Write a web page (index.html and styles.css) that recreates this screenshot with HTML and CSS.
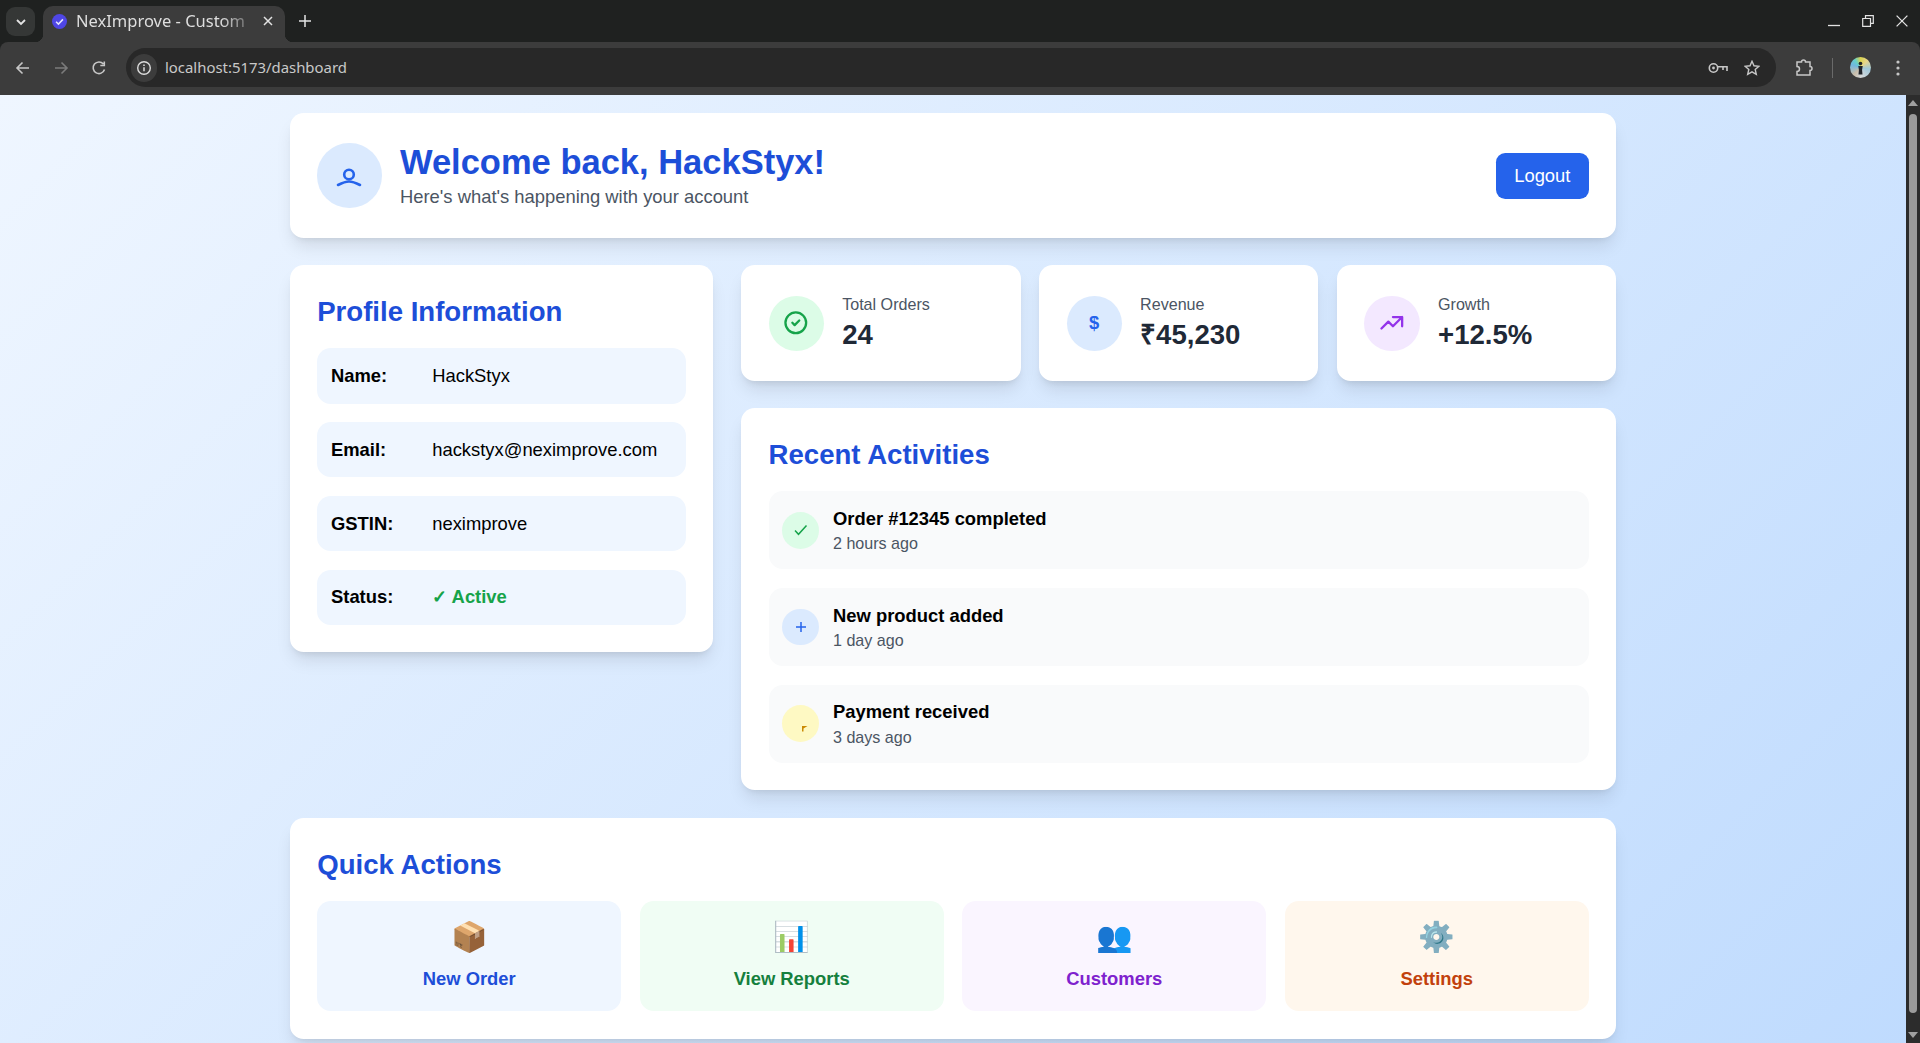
FILE: index.html
```html
<!DOCTYPE html>
<html lang="en">
<head>
<meta charset="UTF-8">
<meta name="viewport" content="width=device-width, initial-scale=1.0">
<title>NexImprove - Customer Dashboard</title>
<link rel="stylesheet" href="styles.css">
</head>
<body>
<div class="browser">
  <div class="tabstrip">
    <div class="tab-search"><svg width="12" height="12" viewBox="0 0 12 12"><path d="M2 4l4 4 4-4" fill="none" stroke="#e3e3e3" stroke-width="1.8"/></svg></div>
    <div class="tab">
      <svg class="favicon" width="15" height="15" viewBox="0 0 14 14"><circle cx="7" cy="7" r="7" fill="#4f46e5"/><path d="M3.8 7.200l2.200 2.200 4.200-4.400" fill="none" stroke="#e6e6ff" stroke-width="1.400"/></svg>
      <span class="tab-title">NexImprove - Custom</span>
      <svg class="tab-close" width="10" height="10" viewBox="0 0 10 10"><path d="M1 1l8 8M9 1l-8 8" stroke="#e3e3e3" stroke-width="1.5"/></svg>
    </div>
    <svg class="new-tab" width="12" height="12" viewBox="0 0 12 12"><path d="M6 0v12M0 6h12" stroke="#e3e3e3" stroke-width="1.5"/></svg>
    <div class="win-btns">
      <svg width="12" height="12" viewBox="0 0 12 12"><path d="M0 10.500h12" stroke="#e3e3e3" stroke-width="1.300"/></svg>
      <svg width="12" height="12" viewBox="0 0 12 12"><path d="M3.500 3V.7h7.800v7.600H9M.7 3.500h7.800v7.800H.7z" fill="none" stroke="#e3e3e3" stroke-width="1.200"/></svg>
      <svg width="12" height="12" viewBox="0 0 12 12"><path d="M.6.6l10.800 10.800M11.400.6L.6 11.400" stroke="#e3e3e3" stroke-width="1.300"/></svg>
    </div>
  </div>
  <div class="toolbar">
    <svg class="nav" width="16" height="16" viewBox="0 0 16 16"><path d="M14 8H2.500M7.500 2.500L2 8l5.500 5.500" fill="none" stroke="#c7c7c7" stroke-width="1.600"/></svg>
    <svg class="nav" width="16" height="16" viewBox="0 0 16 16"><path d="M2 8h11.500M8.500 2.500L14 8l-5.500 5.500" fill="none" stroke="#7b7b7b" stroke-width="1.600"/></svg>
    <svg class="nav" width="16" height="16" viewBox="0 0 16 16"><path d="M13.500 9.500A5.800 5.800 0 1 1 12.400 4M13.300 1.500v4h-4" fill="none" stroke="#c7c7c7" stroke-width="1.600"/></svg>
    <div class="omnibox">
      <div class="site-info"><svg width="16" height="16" viewBox="0 0 16 16"><circle cx="8" cy="8" r="6.300" fill="none" stroke="#dcdcdc" stroke-width="1.400"/><path d="M8 7.200v4M8 4.400v1.500" stroke="#dcdcdc" stroke-width="1.500"/></svg></div>
      <span class="url">localhost:5173/dashboard</span>
      <svg class="key" width="20" height="12" viewBox="0 0 20 12"><circle cx="5.500" cy="6" r="4.200" fill="none" stroke="#c7c7c7" stroke-width="1.600"/><circle cx="5.500" cy="6" r="1.400" fill="#c7c7c7"/><path d="M9.500 4.800h9.500v4.200M15 4.800v3.200" fill="none" stroke="#c7c7c7" stroke-width="1.600"/></svg>
      <svg class="star" width="16" height="16" viewBox="0 0 16 16"><path d="M8 1.300l2 4.500 4.900.5-3.700 3.200 1.100 4.800L8 11.800l-4.300 2.500 1.100-4.800L1.100 6.300 6 5.800z" fill="none" stroke="#c7c7c7" stroke-width="1.400"/></svg>
    </div>
    <svg class="ext" width="18" height="18" viewBox="0 0 18 18"><path d="M2 3h4.500a2 2 0 0 1 4 0H15v4.500a2 2 0 0 1 0 4V16H2v-3.500a2 2 0 0 0 0-5z" fill="none" stroke="#c7c7c7" stroke-width="1.500"/></svg>
    <div class="divider"></div>
    <div class="profile"><svg width="21" height="21" viewBox="0 0 21 21"><circle cx="10.500" cy="6.500" r="1.800" fill="#20242a"/><path d="M8.300 9h4.400l-.6 4 .4 4.500H8.500l.4-4.500z" fill="#20242a"/></svg></div>
    <svg class="dots" width="4" height="16" viewBox="0 0 4 16"><circle cx="2" cy="2" r="1.600" fill="#c7c7c7"/><circle cx="2" cy="8" r="1.600" fill="#c7c7c7"/><circle cx="2" cy="14" r="1.600" fill="#c7c7c7"/></svg>
  </div>
</div>

<div class="viewport">
  <main class="page">
    <header class="card welcome">
      <div class="avatar">
        <svg width="28" height="28" viewBox="0 0 28 28"><circle cx="14" cy="12.500" r="4.800" fill="none" stroke="#2563eb" stroke-width="2.600"/><path d="M3 23c4-2 7-3.500 11-3.500s7 1.500 11 3.500" fill="none" stroke="#2563eb" stroke-width="2.600" stroke-linecap="round"/></svg>
      </div>
      <div class="welcome-text">
        <h1>Welcome back, HackStyx!</h1>
        <p>Here's what's happening with your account</p>
      </div>
      <button class="logout">Logout</button>
    </header>

    <div class="columns">
      <section class="card profile-card">
        <h2>Profile Information</h2>
        <div class="info-list">
          <div class="info-row"><span class="info-label">Name:</span><span>HackStyx</span></div>
          <div class="info-row"><span class="info-label">Email:</span><span>hackstyx@neximprove.com</span></div>
          <div class="info-row"><span class="info-label">GSTIN:</span><span>neximprove</span></div>
          <div class="info-row"><span class="info-label">Status:</span><span class="active">✓ Active</span></div>
        </div>
      </section>

      <div class="right-col">
        <div class="stats">
          <div class="card stat">
            <div class="stat-icon green"><svg class="icon-lg" viewBox="0 0 24 24"><path d="M9 12l2 2 4-4m6 2a9 9 0 1 1-18 0 9 9 0 0 1 18 0z" fill="none" stroke="#16a34a" stroke-width="2" stroke-linecap="round" stroke-linejoin="round"/></svg></div>
            <div><div class="stat-label">Total Orders</div><div class="stat-value">24</div></div>
          </div>
          <div class="card stat">
            <div class="stat-icon blue"><span class="dollar">$</span></div>
            <div><div class="stat-label">Revenue</div><div class="stat-value">₹45,230</div></div>
          </div>
          <div class="card stat">
            <div class="stat-icon purple"><svg class="icon-lg" viewBox="0 0 24 24"><path d="M13 7h8m0 0v8m0-8l-8 8-4-4-6 6" fill="none" stroke="#9333ea" stroke-width="2" stroke-linecap="round" stroke-linejoin="round"/></svg></div>
            <div><div class="stat-label">Growth</div><div class="stat-value">+12.5%</div></div>
          </div>
        </div>

        <section class="card activities">
          <h2>Recent Activities</h2>
          <div class="activity-list">
            <div class="activity">
              <div class="activity-icon green"><svg width="16" height="16" viewBox="0 0 16 16"><path d="M2 8.500l3.500 3.800 8-8.800" fill="none" stroke="#16a34a" stroke-width="1.500"/></svg></div>
              <div><div class="activity-title">Order #12345 completed</div><div class="activity-time">2 hours ago</div></div>
            </div>
            <div class="activity">
              <div class="activity-icon blue"><svg width="16" height="16" viewBox="0 0 16 16"><path d="M8 3v10M3 8h10" fill="none" stroke="#2563eb" stroke-width="1.500"/></svg></div>
              <div><div class="activity-title">New product added</div><div class="activity-time">1 day ago</div></div>
            </div>
            <div class="activity">
              <div class="activity-icon yellow"><svg class="tick" width="6" height="6" viewBox="0 0 6 6"><path d="M0 0h5.500L1.500 2.500V5.500H0z" fill="#ca8a04"/></svg></div>
              <div><div class="activity-title">Payment received</div><div class="activity-time">3 days ago</div></div>
            </div>
          </div>
        </section>
      </div>
    </div>

    <section class="card quick">
      <h2>Quick Actions</h2>
      <div class="tiles">
        <a class="tile tile-blue"><span class="emoji">📦</span><span>New Order</span></a>
        <a class="tile tile-green"><span class="emoji">📊</span><span>View Reports</span></a>
        <a class="tile tile-purple"><span class="emoji">👥</span><span>Customers</span></a>
        <a class="tile tile-orange"><span class="emoji">⚙️</span><span>Settings</span></a>
      </div>
    </section>
  </main>
  <div class="scrollbar">
    <div class="arrow-up"></div>
    <div class="thumb"></div>
    <div class="arrow-down"></div>
  </div>
</div>
</body>
</html>
```

FILE: styles.css
```css
* { box-sizing: border-box; }
html { font-size: 18.4px; }
html, body {
  margin: 0;
  height: 100%;
  overflow: hidden;
}
body {
  display: flex;
  flex-direction: column;
  font-family: "Liberation Sans", Arial, sans-serif;
  font-size: 1rem;
  line-height: 1.5rem;
  color: #000;
}

/* browser frame */
.browser { height: 95px; flex: none; background: #1f2120; }
.tabstrip {
  height: 42px;
  display: flex;
  align-items: flex-start;
  padding: 6px 0 0 6px;
}
.tab-search {
  width: 29px;
  height: 29px;
  margin-top: 1px;
  border-radius: 9px;
  background: #353736;
  display: flex;
  align-items: center;
  justify-content: center;
}
.tab {
  position: relative;
  width: 242px;
  height: 36px;
  margin-left: 8px;
  padding: 0 12px 6px 9px;
  background: #3c3c3c;
  border-radius: 10px 10px 0 0;
  display: flex;
  align-items: center;
}
.tab::before, .tab::after {
  content: "";
  position: absolute;
  bottom: 0;
  width: 8px;
  height: 8px;
}
.tab::before { left: -8px; background: radial-gradient(circle at 0 0, transparent 8px, #3c3c3c 8.5px); }
.tab::after { right: -8px; background: radial-gradient(circle at 100% 0, transparent 8px, #3c3c3c 8.5px); }
.tab-title {
  flex: 1;
  margin-left: 9px;
  white-space: nowrap;
  font-family: "Noto Sans", sans-serif;
  font-size: 16.5px;
  line-height: 20px;
  color: #dedede;
  -webkit-mask-image: linear-gradient(90deg, #000 80%, transparent 101%);
  mask-image: linear-gradient(90deg, #000 80%, transparent 101%);
}
.favicon { flex: none; }
.tab-close { flex: none; margin-left: 6px; }
.new-tab { margin: 9px 0 0 14px; }
.win-btns {
  margin-left: auto;
  display: flex;
  gap: 22px;
  padding: 9px 12px 0 0;
}
.toolbar {
  height: 53px;
  background: #3c3c3c;
  display: flex;
  align-items: center;
  border-radius: 8px 8px 0 0;
  padding: 0 0 2px 15px;
}
.nav { margin-right: 22px; flex: none; }
.nav:nth-child(3) { margin-right: 19px; }
.omnibox {
  width: 1650px;
  height: 39px;
  background: #282828;
  border-radius: 20px;
  display: flex;
  align-items: center;
  padding: 0 12px 0 5px;
}
.site-info {
  width: 26px;
  height: 28px;
  border-radius: 14px;
  background: #3c3c3c;
  display: flex;
  align-items: center;
  justify-content: center;
}
.url {
  margin-left: 8px;
  padding-bottom: 2px;
  font-family: "Noto Sans", sans-serif;
  font-size: 14.9px;
  line-height: 20px;
  color: #c9c9c9;
}
.key { margin-left: auto; margin-right: -2px; }
.star { margin-left: 18px; margin-right: 4px; }
.ext { margin-left: 19px; }
.divider { width: 1px; height: 20px; background: #6a6a6a; margin-left: 19px; }
.profile {
  width: 21px;
  height: 21px;
  margin-left: 17px;
  border-radius: 50%;
  background: conic-gradient(#d8d24f, #e8d58a 12%, #9fc7d9 28%, #d3d8db 48%, #c9bda9 62%, #70b7e0 80%, #66d0c8 90%, #d8d24f);
}
.profile svg { display: block; }
.dots { margin-left: 25px; }

/* page */
.viewport {
  flex: 1;
  min-height: 0;
  display: flex;
  overflow: hidden;
  background: linear-gradient(135deg, #eff6ff, #bfdbfe);
}
.page {
  flex: 1;
  padding: 1rem 289.6px 0;
  display: flex;
  flex-direction: column;
  gap: 1.5rem;
}
.scrollbar {
  width: 14px;
  flex: none;
  background: #2c2c2c;
  position: relative;
}
.arrow-up, .arrow-down {
  position: absolute;
  left: 2px;
  border-left: 5px solid transparent;
  border-right: 5px solid transparent;
}
.arrow-up { top: 5px; border-bottom: 6px solid #a0a0a0; }
.arrow-down { bottom: 5px; border-top: 6px solid #a0a0a0; }
.thumb {
  position: absolute;
  left: 3px;
  right: 3px;
  top: 19px;
  height: 899px;
  border-radius: 4px;
  background: #9b9b9b;
}

.card {
  background: #fff;
  border-radius: .75rem;
  box-shadow: 0 11.5px 17px -3.5px rgba(0,0,0,.1), 0 4.6px 7px -4.6px rgba(0,0,0,.1);
}
h1, h2, p { margin: 0; }
h2 {
  padding-top: 1.5px;
  font-size: 1.5rem;
  line-height: 2rem;
  font-weight: 700;
  color: #1d4ed8;
}
.welcome {
  flex: none;
  height: 124.4px;
  padding: 0 1.5rem;
  display: flex;
  align-items: center;
}
.avatar {
  width: 3.5rem;
  height: 3.5rem;
  border-radius: 50%;
  background: #dbeafe;
  display: flex;
  align-items: center;
  justify-content: center;
}
.welcome-text { margin: 2px 0 0 1rem; flex: 1; }
h1 {
  font-size: 1.875rem;
  line-height: 2.25rem;
  color: #1d4ed8;
}
.welcome-text p { color: #4b5563; }
.logout {
  padding: .5rem 1rem;
  border: 0;
  border-radius: .5rem;
  background: #2563eb;
  color: #fff;
  font-family: inherit;
  font-size: 1rem;
  line-height: 1.5rem;
}

.columns {
  flex: none;
  display: grid;
  grid-template-columns: 423.8px 1fr;
  gap: 1.5rem;
  align-items: start;
}
.profile-card, .activities { padding: 1.5rem; }
.info-list, .activity-list {
  margin-top: calc(1rem - 1.5px);
  display: flex;
  flex-direction: column;
  gap: 1rem;
}
.info-row {
  min-height: 55.4px;
  padding: .75rem;
  border-radius: .75rem;
  background: #eff6ff;
  display: flex;
  align-items: center;
}
.info-label { width: 5.5rem; font-weight: 700; flex: none; }
.active { color: #16a34a; font-weight: 700; }

.right-col {
  display: flex;
  flex-direction: column;
  gap: 27px;
}
.stats {
  display: grid;
  grid-template-columns: repeat(3, 1fr);
  gap: 1rem;
}
.stat {
  padding: 1.5rem;
  display: flex;
  align-items: center;
  gap: 1rem;
}
.stat-icon {
  width: 3rem;
  height: 3rem;
  border-radius: 50%;
  flex: none;
  display: flex;
  align-items: center;
  justify-content: center;
}
.icon-lg { width: 1.5rem; height: 1.5rem; }
.green { background: #dcfce7; }
.blue { background: #dbeafe; }
.purple { background: #f3e8ff; }
.yellow { background: #fef9c3; }
.dollar { color: #2563eb; font-weight: 700; }
.stat-label { font-size: .875rem; line-height: 1.25rem; color: #4b5563; }
.stat-value { margin-top: .8px; font-size: 1.5rem; line-height: 2rem; font-weight: 700; color: #1f2937; }

.activity {
  min-height: 78.4px;
  padding: .75rem;
  border-radius: .75rem;
  background: #f9fafb;
  display: flex;
  align-items: center;
  gap: .75rem;
}
.activity-icon {
  width: 2rem;
  height: 2rem;
  border-radius: 50%;
  flex: none;
  display: flex;
  align-items: center;
  justify-content: center;
}
.tick { margin: 11px 0 0 8px; }
.activity-title { font-weight: 700; }
.activity-time { font-size: .875rem; line-height: 1.25rem; color: #4b5563; }

.quick { flex: none; padding: 1.5rem; }
.tiles {
  margin-top: calc(1rem - 1.5px);
  display: grid;
  grid-template-columns: repeat(4, 1fr);
  gap: 1rem;
}
.tile {
  padding: 1rem;
  border-radius: .75rem;
  display: flex;
  flex-direction: column;
  align-items: center;
  font-weight: 700;
}
.emoji { font-size: 1.6rem; line-height: 2rem; margin-bottom: .5rem; font-weight: 400; }
.tile-blue { background: #eff6ff; color: #1d4ed8; }
.tile-green { background: #f0fdf4; color: #15803d; }
.tile-purple { background: #faf5ff; color: #7e22ce; }
.tile-orange { background: #fff7ed; color: #c2410c; }
```
